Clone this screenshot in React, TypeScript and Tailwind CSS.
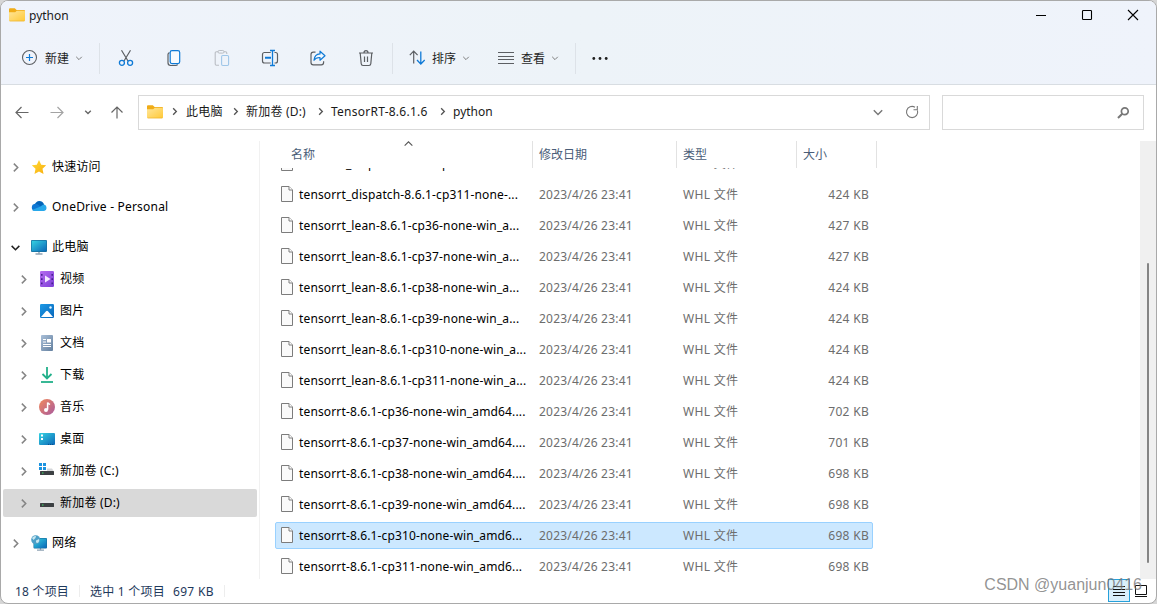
import type { ReactNode } from 'react';

const ui = "font-['Noto_Sans','Noto_Sans_CJK_SC',sans-serif]";

type Dir = 'right' | 'down' | 'up';

const chevrons: Record<Dir, string> = {
  right: 'M3.5 1.5 7 5 3.5 8.5',
  down: 'M1.5 3.5 5 7 8.5 3.5',
  up: 'M1.5 7 5 3.5 8.5 7',
};

function Chevron({ dir, size = 10, color = '#777', weight = 1.2 }: { dir: Dir; size?: number; color?: string; weight?: number }) {
  return (
    <svg width={size} height={size} viewBox="0 0 10 10" fill="none" stroke={color} strokeWidth={weight} className="shrink-0">
      <path d={chevrons[dir]} />
    </svg>
  );
}

function Svg({ children, size = 18, className = '' }: { children: ReactNode; size?: number; className?: string }) {
  return (
    <svg width={size} height={size} viewBox={`0 0 ${size} ${size}`} fill="none" className={'shrink-0 ' + className}>
      {children}
    </svg>
  );
}

function FolderIcon() {
  return (
    <svg width="16" height="14" viewBox="0 0 16 14" className="shrink-0">
      <defs>
        <linearGradient id="folder" x1="0" y1="0" x2="1" y2="1">
          <stop offset="0" stopColor="#ffe69a" />
          <stop offset="1" stopColor="#ffc937" />
        </linearGradient>
      </defs>
      <path d="M0 1.3Q0 .3 1 .3h4.8L7.6 2H15q1 0 1 1v5H0z" fill="#f0ac17" />
      <path d="M0 4.2h6.2l1.6-1.4H15q1 0 1 1v8.4q0 1-1 1H1q-1 0-1-1z" fill="url(#folder)" />
      <path d="M.4 12.7q.2.5.8.5h13.6q.6 0 .8-.5z" fill="#e8a91d" />
    </svg>
  );
}

function TitleBar() {
  return (
    <div className="flex h-[31px] items-start">
      <div className="flex h-[28px] items-center gap-1 pl-2">
        <FolderIcon />
        <span className="text-[12px] leading-4 text-[#1a1a1a] pt-[2px]">python</span>
      </div>
      <div className="ml-auto flex h-[28px] items-center gap-[34px] pr-[17px] text-black">
        <Svg size={12}><path d="M1 6.5h10" stroke="currentColor" /></Svg>
        <Svg size={12}><rect x="1.5" y="1.5" width="9" height="9" rx=".8" stroke="currentColor" strokeWidth="1.1" /></Svg>
        <Svg size={12}><path d="m1 1 10 10M11 1 1 11" stroke="currentColor" strokeWidth="1.1" /></Svg>
      </div>
    </div>
  );
}

const Divider = () => <div className="h-[31px] w-px bg-[#dde2e8]" />;

function Toolbar() {
  const gray = '#5c5f63';
  const blue = '#0f7ad6';
  return (
    <div className="flex h-[52px] items-center pl-5 text-[12px] text-[#1f1f1f]">
      <div className="flex w-[78px] items-center">
        <Svg>
          <circle cx="8.5" cy="8.5" r="7" stroke={gray} strokeWidth="1.1" />
          <path d="M8.5 5v7M5 8.5h7" stroke={blue} strokeWidth="1.2" />
        </Svg>
        <span className="ml-[6px] mr-[6px] pt-px">新建</span>
        <Chevron dir="down" size={8} color="#777" />
      </div>
      <Divider />
      <div className="ml-[17px] flex items-center gap-[30px]">
        <Svg>
          <path d="M4.5 1.2 11 12M13.5 1.2 7 12" stroke={gray} strokeWidth="1.2" />
          <circle cx="4.9" cy="13.8" r="2.5" stroke={blue} strokeWidth="1.3" />
          <circle cx="13.1" cy="13.8" r="2.5" stroke={blue} strokeWidth="1.3" />
        </Svg>
        <Svg>
          <path d="M4.500 3.600c-1 .3-1.500 1-1.500 2v8.200c0 1.600 1 2.700 2.600 2.700h5c1 0 1.700-.4 2-1.100" stroke={gray} strokeWidth="1.200" />
          <rect x="5.200" y="1.600" width="9.500" height="13" rx="1.800" stroke={blue} strokeWidth="1.200" fill="#f6fafe" />
        </Svg>
        <Svg>
          <path d="M6 16.2H3.4a1.2 1.2 0 0 1-1.2-1.2V4c0-.7.5-1.2 1.2-1.2h9.2c.7 0 1.2.5 1.2 1.2v1" stroke="#b9bdc3" strokeWidth="1.1" />
          <rect x="5" y="1.5" width="6" height="2.6" rx="1.2" stroke="#b9bdc3" fill="#eff3fa" />
          <rect x="8.6" y="6.5" width="7" height="10" rx="1.2" stroke="#9fc6e8" strokeWidth="1.1" />
        </Svg>
        <Svg>
          <path d="M9.700 3.500H3.500c-1.200 0-2 .8-2 2V12c0 1.200.8 2 2 2h6.200M13.500 3.500h1c1.200 0 2 .8 2 2V12c0 1.200-.8 2-2 2h-1" stroke={gray} strokeWidth="1.200" />
          <path d="M4 8.700h6" stroke={blue} strokeWidth="2" />
          <path d="M9 1.500h5M9 16.500h5M11.500 1.500v15" stroke={blue} strokeWidth="1.300" />
        </Svg>
        <Svg>
          <path d="M6.500 3.200H4.300C2.900 3.200 2 4.100 2 5.500v8c0 1.400.9 2.300 2.300 2.300h8c1.400 0 2.300-.9 2.300-2.300v-1.300" stroke={gray} strokeWidth="1.200" />
          <path d="M11 2.200 16 6.800 11 11.200V8.500C8 8.400 6.200 9.300 5 11.300 5.300 7.500 7.300 5.100 11 4.900z" stroke={blue} strokeWidth="1.200" strokeLinejoin="round" fill="#f1f8fe" />
        </Svg>
        <Svg>
          <path d="M2 4h14M7 3.800c0-1.400.9-2.200 2-2.200s2 .8 2 2.200M3.200 4l1 10.800c.1 1 .8 1.700 1.800 1.700h6c1 0 1.700-.7 1.800-1.700l1-10.800M7.500 7.500V13M10.500 7.500V13" stroke={gray} strokeWidth="1.200" />
        </Svg>
      </div>
      <div className="ml-[17px] flex"><Divider /></div>
      <div className="ml-[16px] flex w-[73px] items-center">
        <Svg>
          <path d="M4.700 14.500V2.500M.8 6.200l3.900-4 3.900 4" stroke={gray} strokeWidth="1.200" />
          <path d="M11.800 2.500v12.300M8 11l3.800 4 3.900-4" stroke={blue} strokeWidth="1.300" />
        </Svg>
        <span className="ml-[5px] mr-[6px] pt-px">排序</span>
        <Chevron dir="down" size={8} color="#777" />
      </div>
      <div className="ml-[15px] flex w-[77px] items-center">
        <Svg>
          <path d="M1 3.500h16M1 7.500h16M1 10.500h16M1 14.500h16" stroke={gray} strokeWidth="1" />
        </Svg>
        <span className="ml-[6px] mr-[6px] pt-px">查看</span>
        <Chevron dir="down" size={8} color="#777" />
      </div>
      <div className="ml-px flex"><Divider /></div>
      <Svg className="ml-[15px]">
        <circle cx="2.800" cy="9.500" r="1.400" fill="#1f1f1f" />
        <circle cx="9" cy="9.500" r="1.400" fill="#1f1f1f" />
        <circle cx="15.200" cy="9.500" r="1.400" fill="#1f1f1f" />
      </Svg>
    </div>
  );
}

const Crumb = () => (
  <div className="flex w-[16px] pl-px"><Chevron dir="right" size={9} color="#555" weight={1.500} /></div>
);

function AddressBar() {
  return (
    <div className="flex h-[56px] items-center pb-px pl-[13px] pr-3">
      <Svg size={16}><path d="M14.500 7.500H2.500M7.500 2 2 7.500 7.500 13" stroke="#666" strokeWidth="1.200" /></Svg>
      <Svg size={16} className="ml-[19px]"><path d="M1.500 7.500h12M8.500 2 14 7.500 8.500 13" stroke="#a3a3a3" strokeWidth="1.200" /></Svg>
      <div className="ml-[19px] pb-[2px]"><Chevron dir="down" size={8} color="#666" weight={1.700} /></div>
      <Svg size={16} className="ml-[17px]"><path d="M8 13.500V2M2.500 7.500 8 2l5.500 5.500" stroke="#666" strokeWidth="1.200" /></Svg>
      <div className="ml-[13px] flex h-[35px] w-[792px] shrink-0 items-center border border-[#d9d9d9] pb-[2px] pl-2 text-[12px] text-[#1a1a1a]">
        <FolderIcon />
        <div className="ml-[6px] flex w-[17px] pl-px"><Chevron dir="right" size={9} color="#555" weight={1.500} /></div>
        <span className="w-[44px] whitespace-nowrap tracking-[0.2px]">此电脑</span>
        <Crumb />
        <span className="w-[69px] whitespace-nowrap tracking-[0.2px]">新加卷 (D:)</span>
        <Crumb />
        <span className="w-[106px] whitespace-nowrap tracking-[0.25px]">TensorRT-8.6.1.6</span>
        <Crumb />
        <span>python</span>
        <div className="ml-auto flex items-center gap-[21px] pr-[10px]">
          <Chevron dir="down" size={12} color="#777" />
          <Svg size={14}>
            <path d="M12.500 5.500A5.600 5.600 0 1 1 10 2.200M12.300 1v3.800H8.500" stroke="#777" strokeWidth="1.100" />
          </Svg>
        </div>
      </div>
      <div className="ml-[12px] flex h-[35px] w-[202px] shrink-0 items-center justify-end border border-[#d9d9d9] pr-[13px]">
        <Svg size={14}>
          <circle cx="8.800" cy="5.200" r="3.400" stroke="#777" strokeWidth="1.700" />
          <path d="M6.300 7.700 2 12" stroke="#777" strokeWidth="2" />
        </Svg>
      </div>
    </div>
  );
}

function Monitor() {
  return (
    <>
      <path d="M8 12v3M4.500 15h7" stroke="#8fa3b4" strokeWidth="1.400" />
      <rect x="0" y="1" width="16" height="12" rx="1" fill="#176f9e" />
      <rect x=".7" y="1.700" width="14.600" height="10.600" rx=".4" fill="url(#screen)" />
    </>
  );
}

const icons: Record<string, ReactNode> = {
  star: <path d="m8 1 2.200 4.700 5 .6-3.700 3.500 1 5.200L8 12.500 3.500 15l1-5.200L.8 6.300l5-.6z" fill="url(#gold)" />,
  cloud: (
    <>
      <path d="M3.500 6.500C4.200 3.500 6 2 8.300 2c2.400 0 4.200 1.400 4.900 3.800L9 9z" fill="#0364b8" />
      <path d="M3.800 12A3.700 3.700 0 0 1 4 4.700c2-.1 3 .8 7 3.800l-4 3.500z" fill="#0f78d4" />
      <path d="M12.300 5.500A3.300 3.300 0 0 1 13 12H3.500c-1 0-1.800-.4-2.400-1l8.400-3.600z" fill="#28a8ea" />
    </>
  ),
  pc: <Monitor />,
  video: (
    <>
      <rect x="1" y="0" width="14" height="16" rx="1.300" fill="url(#purple)" />
      <path d="M2.800 3v11M13.200 3v11" stroke="#45208c" strokeWidth="1.500" strokeDasharray="1.700 2.600" />
      <path d="M6 4.500v7L11.500 8z" fill="#f4eaff" />
    </>
  ),
  picture: (
    <>
      <rect x="1" y="1" width="14" height="14" rx="1.200" fill="url(#sky)" />
      <path d="m2 14 5-5.800q1-.9 2 0l5 5.800z" fill="#fff" />
      <circle cx="11.500" cy="4.500" r="1.200" fill="#e4f4ff" />
    </>
  ),
  doc: (
    <>
      <rect x="2" y="0" width="12" height="16" rx="1" fill="url(#slate)" />
      <path d="M4 4.500h3M4 7h3M4 9.500h8M4 11.500h8" stroke="#fff" strokeWidth="1" />
      <rect x="8" y="4" width="4" height="3.500" fill="#fff" />
    </>
  ),
  download: (
    <>
      <path d="M8 0v11M3.500 7 8 11.500 12.500 7" stroke="#22b08a" strokeWidth="1.800" />
      <path d="M2 15h12" stroke="#22b08a" strokeWidth="1.800" />
    </>
  ),
  music: (
    <>
      <circle cx="8" cy="8" r="8" fill="url(#coral)" />
      <path d="M8.600 10.800V3.500c.5 1.200 1.500 1.400 2.400 2" stroke="#fff" strokeWidth="1.500" />
      <circle cx="7" cy="10.900" r="2" fill="#fff" />
    </>
  ),
  desktop: (
    <>
      <rect x="0" y="2" width="16" height="12" rx="1" fill="url(#screen)" />
      <path d="M2 4.500h2M2 8h2" stroke="#fff" strokeWidth="1.800" />
      <path d="M9 13.400h6" stroke="#0a4f86" strokeDasharray="1 1" />
    </>
  ),
  driveC: (
    <>
      <path d="M0 0h3v3H0zM4 0h3v3H4zM0 4h3v3H0zM4 4h3v3H4z" fill="#1b93e0" />
      <path d="M8 5.500h5l2 3H1V8h7z" fill="#d5d7da" />
      <rect x="1" y="8" width="14" height="4" rx=".5" fill="#3c4043" />
      <path d="M3 10h1.500" stroke="#3fe06b" strokeWidth="1.200" />
    </>
  ),
  driveD: (
    <>
      <path d="M3 5.500h10l2 2.500H1z" fill="#e2e4e6" />
      <rect x="1" y="8" width="14" height="4" rx=".5" fill="#3c4043" />
      <path d="M3 10h1.500" stroke="#3fe06b" strokeWidth="1.200" />
    </>
  ),
  network: (
    <>
      <path d="M9.500 12v3M6 15.200h7" stroke="#8fa3b4" strokeWidth="1.300" />
      <rect x="2.500" y="3" width="13.500" height="10.500" rx="1" fill="#176f9e" />
      <rect x="3.100" y="3.600" width="12.300" height="9.300" fill="url(#screen)" />
      <circle cx="4.700" cy="4.700" r="4.500" fill="#4d9fc7" />
      <path d="M1 3q2-2.500 4-2l-.5 2L2.500 5zM5 5.500l3-1.500q1 2-1 4L5 7.500z" fill="#c6e6f0" />
    </>
  ),
};

function Gradients() {
  const list = [
    ['screen', '#35d3e2', '#0b66b7'],
    ['gold', '#ffdc3a', '#f9ad0b'],
    ['purple', '#b66cf0', '#7c3fd6'],
    ['sky', '#1c9ae6', '#0866ba'],
    ['slate', '#a9bfd8', '#64809f'],
    ['coral', '#f28a5b', '#a85a9e'],
  ];
  return (
    <svg width="0" height="0" className="absolute">
      <defs>
        {list.map(([id, from, to]) => (
          <linearGradient key={id} id={id} x1="0" y1="0" x2="1" y2="1">
            <stop offset="0" stopColor={from} />
            <stop offset="1" stopColor={to} />
          </linearGradient>
        ))}
      </defs>
    </svg>
  );
}

const folders = [
  { icon: 'video', label: '视频' },
  { icon: 'picture', label: '图片' },
  { icon: 'doc', label: '文档' },
  { icon: 'download', label: '下载' },
  { icon: 'music', label: '音乐' },
  { icon: 'desktop', label: '桌面' },
  { icon: 'driveC', label: '新加卷 (C:)' },
  { icon: 'driveD', label: '新加卷 (D:)', selected: true },
];

function TreeItem({ icon, label, open, selected, child }: { icon: string; label: string; open?: boolean; selected?: boolean; child?: boolean }) {
  const cls = child ? 'pl-[15px] ' : 'pl-[7px] ';
  return (
    <div className={'mx-[2px] flex h-7 items-center rounded-[2px] ' + cls + (selected ? 'bg-[#d9d9d9]' : '')}>
      <Chevron dir={open ? 'down' : 'right'} size={11} color={open ? '#222' : '#858585'} weight={1.400} />
      <Svg size={16} className="ml-[10px]">{icons[icon]}</Svg>
      <span className="ml-[5px] whitespace-nowrap text-[12px] leading-4 tracking-[0.2px] text-black">{label}</span>
    </div>
  );
}

function Sidebar() {
  return (
    <div className="flex w-[259px] shrink-0 flex-col border-r border-[#f1f1f1] pt-3">
      <TreeItem icon="star" label="快速访问" />
      <div className="mt-3"><TreeItem icon="cloud" label="OneDrive - Personal" /></div>
      <div className="mb-1 mt-3"><TreeItem icon="pc" label="此电脑" open /></div>
      <div className="flex flex-col gap-1">
        {folders.map((f) => <TreeItem key={f.label} {...f} child />)}
      </div>
      <div className="mt-3"><TreeItem icon="network" label="网络" /></div>
    </div>
  );
}

const files = [
  ['tensorrt_dispatch-8.6.1-cp310-none-...', '424 KB'],
  ['tensorrt_dispatch-8.6.1-cp311-none-...', '424 KB'],
  ['tensorrt_lean-8.6.1-cp36-none-win_a...', '427 KB'],
  ['tensorrt_lean-8.6.1-cp37-none-win_a...', '427 KB'],
  ['tensorrt_lean-8.6.1-cp38-none-win_a...', '424 KB'],
  ['tensorrt_lean-8.6.1-cp39-none-win_a...', '424 KB'],
  ['tensorrt_lean-8.6.1-cp310-none-win_a...', '424 KB'],
  ['tensorrt_lean-8.6.1-cp311-none-win_a...', '424 KB'],
  ['tensorrt-8.6.1-cp36-none-win_amd64....', '702 KB'],
  ['tensorrt-8.6.1-cp37-none-win_amd64....', '701 KB'],
  ['tensorrt-8.6.1-cp38-none-win_amd64....', '698 KB'],
  ['tensorrt-8.6.1-cp39-none-win_amd64....', '698 KB'],
  ['tensorrt-8.6.1-cp310-none-win_amd6...', '698 KB'],
  ['tensorrt-8.6.1-cp311-none-win_amd6...', '698 KB'],
];
const selectedFile = 12;

function FileList() {
  const head = 'h-full border-r border-[#e2e2e2] pt-[5px]';
  return (
    <div className="flex min-w-0 flex-1 flex-col">
      <div className="flex h-[27px] text-[12px] leading-[18px] text-[#4a5d78]">
        <div className={'relative w-[273px] pl-[31px] ' + head}>
          名称
          <div className="absolute left-[143px] top-[-3px]"><Chevron dir="up" size={11} color="#555" weight={1} /></div>
        </div>
        <div className={'w-[144px] pl-[6px] ' + head}>修改日期</div>
        <div className={'w-[120px] pl-[6px] ' + head}>类型</div>
        <div className={'w-[80px] pl-[6px] ' + head}>大小</div>
      </div>
      <div className="flex-1 overflow-hidden">
        <div className="-mt-5 pl-[15px]">
          {files.map(([name, size], i) => (
            <div key={name} className="flex h-[31px] items-center">
              <div className={'flex h-[27px] w-[598px] items-center rounded-[2px] border text-[12px] leading-4 whitespace-nowrap ' + (i === selectedFile ? 'border-[#99d1ff] bg-[#cce8ff]' : 'border-transparent')}>
                <svg width="12" height="16" viewBox="0 0 12 16" className="mb-px ml-[5px] shrink-0">
                  <path d="M.5.5h7.500L11.500 4v11.500H.5z" fill="#fafafa" stroke="#7c7c7c" />
                  <path d="M8 .5V4h3.500" fill="#fff" stroke="#7c7c7c" />
                </svg>
                <span className="ml-[6px] w-[240px] text-black tracking-[0.14px]">{name}</span>
                <span className="w-[144px] text-[#6d6d6d] tracking-[0.2px]">2023/4/26 23:41</span>
                <span className="w-[120px] text-[#6d6d6d] tracking-[0.3px]">WHL 文件</span>
                <span className="w-[66px] text-right text-[#6d6d6d] tracking-[0.3px]">{size}</span>
              </div>
            </div>
          ))}
        </div>
      </div>
    </div>
  );
}

function StatusBar() {
  return (
    <div className="relative flex h-[23px] items-center pl-[14px] text-[12px] leading-4 text-[#1e395b]">
      <span className="w-[64px] whitespace-nowrap pt-[2px] tracking-[0.2px]">18 个项目</span>
      <div className="h-3 w-px bg-[#ededed]" />
      <span className="ml-[10px] w-[83px] whitespace-nowrap pt-[2px] tracking-[0.25px]">选中 1 个项目</span>
      <span className="w-[51px] whitespace-nowrap pt-[2px] tracking-[0.3px]">697 KB</span>
      <div className="h-3 w-px bg-[#ededed]" />
      <div className="ml-auto flex items-center pr-[8px]">
        <div className="flex h-[23px] w-[22px] items-center justify-center border border-[#26a0da] bg-[#d9effb]">
          <svg width="12" height="12" viewBox="0 0 12 12" stroke="#111">
            <path d="M0 1.500h12M0 4.500h12M0 7.500h12M0 10.500h12" />
          </svg>
        </div>
        <svg width="14" height="14" viewBox="0 0 14 14" fill="none" stroke="#111" className="ml-[4px]">
          <path d="M1.500 1.500h11v9h-11zM1 12.500h12" />
        </svg>
      </div>
      <div className="absolute right-[14px] top-[-4px] font-['Liberation_Sans',sans-serif] text-[16px] leading-5 whitespace-nowrap text-[#777]/80">CSDN @yuanjun0416</div>
    </div>
  );
}

export default function App() {
  return (
    <div className="h-[604px] w-[1157px] overflow-hidden bg-[#d6d6d6]">
      <div className={'flex h-full w-full flex-col overflow-hidden rounded-lg border border-[#a9a9a9] bg-white ' + ui}>
        <Gradients />
        <div className="h-[84px] border-b border-[#d8dde2] bg-linear-to-r from-[#eff3fb] via-[#edf3f8] to-[#eff3fb]">
          <TitleBar />
          <Toolbar />
        </div>
        <AddressBar />
        <div className="flex h-[438px]">
          <Sidebar />
          <FileList />
          <div className="flex w-4 shrink-0 justify-center bg-[#f0f0f0] pt-[122px]">
            <div className="h-[300px] w-[2px] rounded-full bg-[#858585]" />
          </div>
        </div>
        <StatusBar />
      </div>
    </div>
  );
}
